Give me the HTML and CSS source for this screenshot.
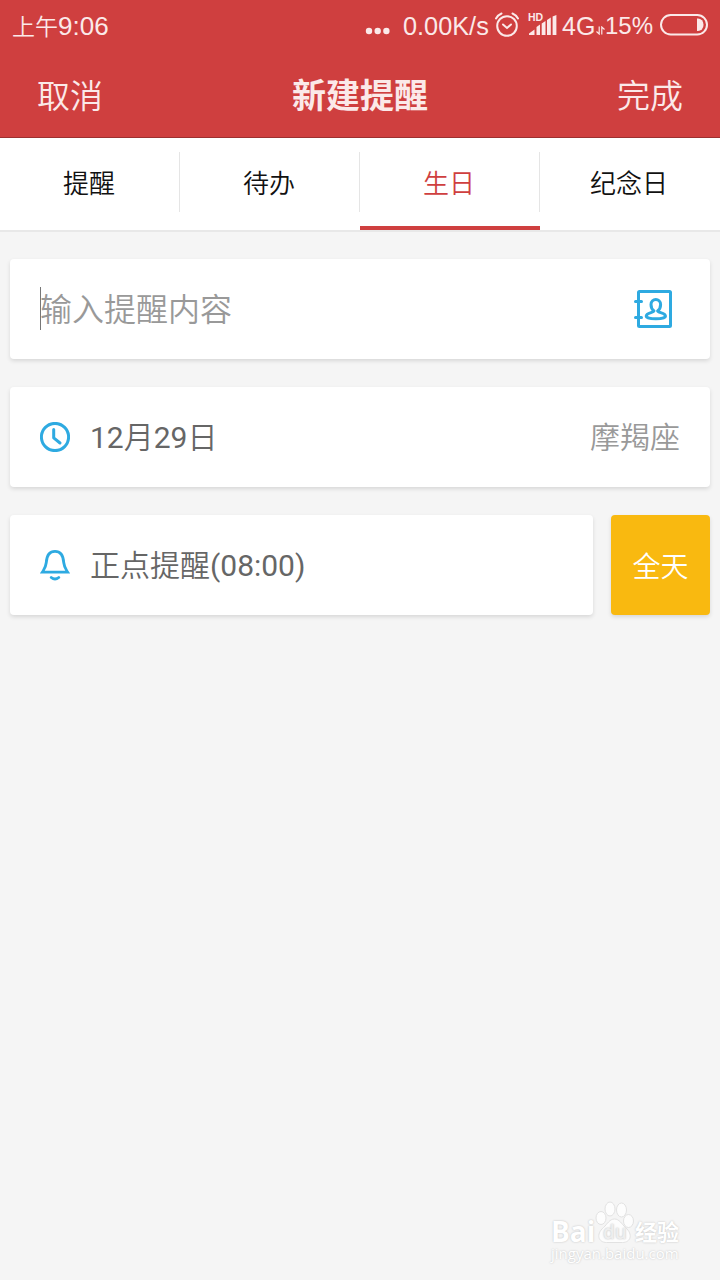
FILE: index.html
```html
<!DOCTYPE html>
<html lang="zh-CN">
<head>
    <meta charset="UTF-8">
    <meta name="viewport" content="width=device-width, initial-scale=1.0">
    <title>新建提醒</title>
    <link rel="stylesheet" href="styles.css">
</head>
<body>
    <header>
        <div class="status">
            <div class="time"><span class="ampm">上午</span>9:06</div>
            <div class="status-right">
                <svg class="dots" width="26" height="8" viewBox="0 0 26 8">
                    <circle cx="4" cy="4" r="3.2"/>
                    <circle cx="12.7" cy="4" r="3.2"/>
                    <circle cx="21.4" cy="4" r="3.2"/>
                </svg>
                <span class="speed">0.00K/s</span>
                <svg class="alarm" width="26" height="26" viewBox="0 0 26 26">
                    <circle cx="13" cy="14" r="9.8"/>
                    <path d="M9 12.5l4 3.5 4-3.5M2 6.5q2-3.5 5.5-5M24 6.5q-2-3.5-5.5-5"/>
                </svg>
                <div class="signal">
                    <span class="hd">HD</span>
                    <svg width="30" height="22" viewBox="0 0 30 22">
                        <path d="M1 21v-1.5l5.5-4V21zM8.5 21v-8l3.5-2.5V21zM13.7 21V9.5l3.8-2.5V21zM19 21V6l3.8-2.5V21zM24.6 21V2.5L28.4 1v20z"/>
                    </svg>
                </div>
                <span class="net">4G</span>
                <svg class="updown" width="9" height="9" viewBox="0 0 9 9">
                    <path d="M3.2.5v7.5L.5 5.5M5.8 8.5V1l2.7 2.5"/>
                </svg>
                <span class="percent">15%</span>
                <svg class="battery" width="48" height="22" viewBox="0 0 48 22">
                    <rect x="1" y="1" width="46" height="19.5" rx="9.75"/>
                    <path d="M37 4.5h1a5.5 6.2 0 0 1 0 12.500h-1z"/>
                </svg>
            </div>
        </div>
        <div class="navbar">
            <span>取消</span>
            <h1>新建提醒</h1>
            <span>完成</span>
        </div>
    </header>

    <nav class="tabs">
        <div class="tab">提醒</div>
        <div class="tab">待办</div>
        <div class="tab active">生日</div>
        <div class="tab">纪念日</div>
    </nav>

    <main>
        <div class="card input-card">
            <div class="field">输入提醒内容</div>
            <svg class="icon" width="40" height="40" viewBox="0 0 40 40">
                <rect x="5.5" y="2.5" width="32" height="35" rx="1"/>
                <path d="M2.5 12.500h6M2.500 28.500h6"/>
                <path class="person" d="M21 22C19 20.500 18 17.500 18 15.500C18 8.800 27.600 8.800 27.600 15.500C27.600 17.500 26.600 20.500 24.600 22C25 24 32.500 23.500 32.500 27.300C32.500 30.600 13.200 30.600 13.200 27.300C13.200 23.500 20.600 24 21 22z"/>
            </svg>
        </div>
        <div class="card">
            <svg class="icon" width="30" height="30" viewBox="0 0 30 30">
                <circle cx="15" cy="15" r="13.6"/>
                <path d="M13.7 7.5v8.3l6.3 5.200"/>
            </svg>
            <span class="text"><b>12</b>月<b>29</b>日</span>
            <span class="sign">摩羯座</span>
        </div>
        <div class="row">
            <div class="card">
                <svg class="icon bell" width="30" height="32" viewBox="0 0 30 32">
                    <path d="M2.300 23.200h25.400C25.800 20 24.300 18.500 23.700 13.500C23.300 7 21.500 2.400 15 2.400S6.700 7 6.300 13.500C5.700 18.500 4.200 20 2.300 23.200z"/>
                    <path d="M11.200 28.500q3.800 3 7.600 0"/>
                </svg>
                <span class="text">正点提醒<b>(08:00)</b></span>
            </div>
            <div class="allday">全天</div>
        </div>
    </main>

    <footer class="watermark">
        <div class="logo">
            <span class="bai">Bai</span>
            <div class="paw">
                <svg width="41" height="42" viewBox="0 0 41 42">
                    <ellipse cx="7" cy="17" rx="5" ry="6.5"/>
                    <ellipse cx="16" cy="8" rx="5" ry="7"/>
                    <ellipse cx="27.5" cy="9" rx="5" ry="7"/>
                    <ellipse cx="34.5" cy="20" rx="5" ry="6.5"/>
                    <path d="M20.5 18c5 0 7 5 11 8.5c8 7 5 15-3 15h-16c-8 0-11-8-3-15c4-3.500 6-8.500 11-8.500z"/>
                </svg>
                <span class="du">du</span>
            </div>
            <span class="jy">经验</span>
        </div>
        <div class="url">jingyan.baidu.com</div>
    </footer>
</body>
</html>
```
FILE: styles.css
```css
* {
    box-sizing: border-box;
}
body {
    margin: 0;
    height: 1280px;
    display: flex;
    flex-direction: column;
    background-color: #f5f5f5;
    font-family: Roboto, "Noto Sans CJK SC", sans-serif;
    font-weight: 350;
    overflow: hidden;
}
header {
    height: 138px;
    background-color: #cf3f3f;
    border-bottom: 1px solid #9c3030;
    color: #fbe9e9;
}
.status {
    height: 52px;
    padding: 0 12px;
    display: flex;
    justify-content: space-between;
    align-items: center;
    font-family: "Liberation Sans", "Noto Sans CJK SC", sans-serif;
    font-size: 25px;
    line-height: 52px;
    white-space: nowrap;
}
.time {
    font-size: 26px;
}
.ampm {
    font-size: 23px;
}
.status-right {
    display: flex;
    align-items: center;
}
.dots {
    margin: 10px 12px 0 0;
    fill: #fbe9e9;
}
.speed {
    width: 91px;
    font-size: 25.3px;
}
.alarm {
    margin-bottom: 2px;
    fill: none;
    stroke: #fbe9e9;
    stroke-width: 2;
    stroke-linecap: round;
}
.signal {
    position: relative;
    margin: 0 4px 2px 8px;
    height: 22px;
}
.signal svg {
    display: block;
    fill: #fbe9e9;
}
.hd {
    position: absolute;
    left: 0;
    top: -2px;
    font-size: 10.5px;
    font-weight: bold;
    line-height: 10px;
}
.net {
    width: 34px;
}
.updown {
    margin-top: 8px;
    fill: none;
    stroke: #fbe9e9;
    stroke-width: 1.2;
}
.percent {
    width: 54px;
    font-size: 24px;
}
.battery {
    margin: 0 0 2px 1px;
    fill: none;
    stroke: #fbe9e9;
    stroke-width: 2;
}
.battery path {
    fill: #fbe9e9;
    stroke: none;
}
.navbar {
    height: 83px;
    padding: 0 37px;
    display: flex;
    justify-content: space-between;
    align-items: center;
    font-size: 33px;
}
h1 {
    margin: 0;
    font-size: 34px;
    font-weight: bold;
}
.tabs {
    height: 94px;
    display: flex;
    background-color: #fff;
    border-bottom: 2px solid #e8e8e8;
}
.tab {
    width: 25%;
    height: 92px;
    padding: 0 2px 6px 0;
    position: relative;
    display: flex;
    justify-content: center;
    align-items: center;
    font-size: 26px;
    color: #111;
}
.tab:not(:last-child)::after {
    content: "";
    position: absolute;
    right: 0;
    top: 14px;
    width: 1px;
    height: 60px;
    background-color: #e5e5e5;
}
.tab.active {
    color: #cf3f3f;
    padding-bottom: 2px;
    border-bottom: 4px solid #cf3f3f;
}
main {
    padding: 27px 10px 0;
    display: flex;
    flex-direction: column;
    gap: 28px;
}
.card {
    flex: 1;
    height: 100px;
    min-height: 100px;
    padding: 0 30px;
    display: flex;
    align-items: center;
    background-color: #fff;
    border-radius: 4px;
    box-shadow: 0 2px 4px rgba(0, 0, 0, 0.12);
    font-size: 30px;
    color: #666;
}
.input-card {
    padding-right: 37px;
    justify-content: space-between;
}
.field {
    height: 43px;
    margin-bottom: 2px;
    border-left: 1px solid #777;
    font-size: 32px;
    line-height: 47px;
    text-indent: -1px;
    color: #999;
}
.icon {
    fill: none;
    stroke: #2eaae1;
    stroke-width: 3;
    stroke-linecap: round;
    stroke-linejoin: round;
}
.bell {
    stroke-linejoin: miter;
    stroke-width: 2.8;
}
.text {
    margin-left: 20px;
    padding-bottom: 4px;
}
.text b {
    font-weight: 400;
}
.sign {
    margin-left: auto;
    padding-bottom: 4px;
    color: #999;
}
.row {
    display: flex;
    gap: 18px;
}
.allday {
    width: 99px;
    height: 100px;
    display: flex;
    justify-content: center;
    align-items: center;
    background-color: #f9b910;
    border-radius: 4px;
    box-shadow: 0 2px 4px rgba(0, 0, 0, 0.12);
    font-size: 28px;
    color: #fff;
}
.watermark {
    width: 130px;
    margin: auto 39px 17px auto;
    color: #fff;
    font-family: "Open Sans", "Noto Sans CJK SC", sans-serif;
    text-shadow: 0 0 2px #bbb;
}
.logo {
    height: 42px;
    display: flex;
    align-items: flex-end;
    font-weight: bold;
    white-space: nowrap;
}
.bai {
    width: 43px;
    height: 25px;
    font-size: 28px;
    line-height: 27px;
}
.paw {
    position: relative;
    width: 41px;
    height: 42px;
}
.paw svg {
    fill: #fdfdfd;
    stroke: #e2e2e2;
    stroke-width: 1;
}
.du {
    position: absolute;
    left: 9px;
    bottom: 1px;
    font-size: 19px;
    font-weight: 600;
    line-height: 20px;
    color: #eee;
}
.jy {
    font-size: 22px;
    line-height: 24px;
}
.url {
    font-size: 15px;
    font-weight: 400;
    line-height: 20px;
    white-space: nowrap;
}
```
